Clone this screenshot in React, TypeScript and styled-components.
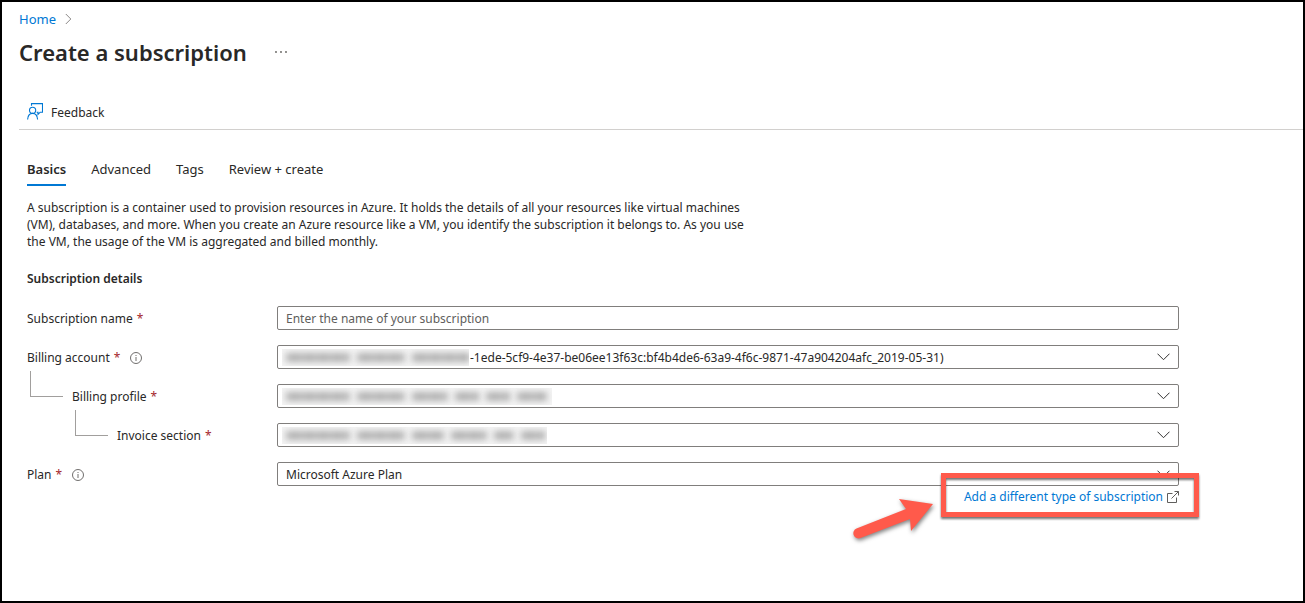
import React from 'react';
import styled, { createGlobalStyle } from 'styled-components';

const GlobalStyle = createGlobalStyle`
  *, *::before, *::after { box-sizing: border-box; }
  body {
    margin: 0;
    background: #fff;
    color: #292827;
    font: 400 12px/20px 'Noto Sans', 'Open Sans', sans-serif;
  }
  button, input, select { font: inherit; color: inherit; }
`;

const Page = styled.div`
  min-height: 100vh;
  padding: 7px 0 24px 17px;
  border: 2px solid #000;
`;

const Breadcrumb = styled.nav`
  display: flex;
  align-items: center;
  gap: 9px;
  font-size: 13px;
`;

const Link = styled.a`
  color: #0078d4;
  text-decoration: none;
`;

const TitleBar = styled.header`
  display: flex;
  align-items: center;
  gap: 26px;
  margin-top: 8px;
`;

const Title = styled.h1`
  margin: 0;
  font-size: 22px;
  font-weight: 600;
  line-height: 30px;
`;

const PlainButton = styled.button`
  display: flex;
  align-items: center;
  gap: 8px;
  padding: 0;
  border: 0;
  background: none;
  cursor: pointer;
`;

const Toolbar = styled.div`
  display: flex;
  height: 35px;
  margin-top: 28px;
  padding: 2px 0 0 8px;
  border-bottom: 1px solid #d2d0ce;
`;

const Content = styled.main`
  padding: 0 124px 0 8px;
`;

const Tabs = styled.div`
  display: flex;
  gap: 25px;
  margin-top: 29px;
`;

const Tab = styled.button<{ $active?: boolean }>`
  padding: 0 0 5px;
  border: 0;
  border-bottom: 2px solid ${(p) => (p.$active ? '#0078d4' : 'transparent')};
  background: none;
  font-size: 13px;
  font-weight: ${(p) => (p.$active ? 600 : 400)};
  cursor: pointer;
`;

const Intro = styled.p`
  max-width: 736px;
  margin: 13px 0 0;
  line-height: 17px;
`;

const SectionTitle = styled.h2`
  margin: 19px 0 0;
  font-size: 12px;
  font-weight: 600;
`;

const Form = styled.form`
  display: flex;
  flex-direction: column;
  gap: 15px;
  margin-top: 17px;
`;

const Row = styled.div`
  display: grid;
  grid-template-columns: 250px 1fr;
`;

const LabelCell = styled.div<{ $level?: number }>`
  display: flex;
  align-items: flex-start;
  height: 24px;
  padding-left: ${(p) => (p.$level ? p.$level * 45 - 42 : 0)}px;
  line-height: 26px;
`;

const Elbow = styled.span`
  width: 33px;
  height: 26px;
  margin: -13px 9px 0 0;
  border: solid #a19f9d;
  border-width: 0 0 1px 1px;
`;

const Required = styled.span`
  margin-left: 4px;
  color: #a4262c;
`;

const InfoButton = styled(PlainButton)`
  height: 26px;
  margin-left: 10px;
`;

const Control = styled.div`
  position: relative;
  display: flex;
`;

const TextBox = styled.input`
  width: 100%;
  height: 24px;
  padding: 0 8px;
  border: 1px solid #807e7c;
  border-radius: 2px;
  background: #fff;
  &::placeholder { color: #605e5c; opacity: 1; }
`;

const Dropdown = styled.select<{ $indent?: number }>`
  width: 100%;
  height: 24px;
  padding: 2px 28px 0 ${(p) => p.$indent ?? 8}px;
  border: 1px solid #807e7c;
  border-radius: 2px;
  background: #fff;
  appearance: none;
`;

const Chevron = styled.svg`
  position: absolute;
  top: 8px;
  right: 9px;
  pointer-events: none;
`;

const Redaction = styled.span<{ $width: number }>`
  position: absolute;
  top: 4px;
  left: 5px;
  width: ${(p) => p.$width}px;
  height: 17px;
  padding: 4px;
  display: flex;
  gap: 7px;
  overflow: hidden;
  background: #f4f4f4;
  pointer-events: none;
`;

const Smudge = styled.span<{ $width: number }>`
  flex: none;
  width: ${(p) => p.$width}px;
  background: repeating-linear-gradient(90deg, #b2b2b2 0 4px, #bebebe 4px 7px, #aaa 7px 12px, #c4c4c4 12px 14px);
  filter: blur(3px);
`;

const LinkLine = styled.div`
  position: relative;
  display: flex;
  align-items: center;
  justify-content: flex-end;
  gap: 4px;
  margin-top: 1px;
`;

const Callout = styled.div`
  position: absolute;
  top: -14px;
  right: -20px;
  width: 258px;
  height: 44px;
  border: 5px solid #ff5a4b;
  filter: drop-shadow(0 2px 1px rgba(0, 0, 0, 0.55));
  pointer-events: none;
`;

const Arrow = styled.svg`
  position: absolute;
  top: 6px;
  right: 240px;
  filter: drop-shadow(1px 2px 2px rgba(0, 0, 0, 0.5));
  pointer-events: none;
`;

const InfoIcon = () => (
  <svg width="12" height="12" viewBox="0 0 12 12" fill="none" stroke="#605e5c" aria-hidden="true">
    <circle cx="6" cy="6" r="5.5" strokeWidth=".9" />
    <path d="M6 5v4M6 3v1" strokeWidth=".9" />
  </svg>
);

interface SelectFieldProps {
  id: string;
  label: string;
  level?: number;
  info?: boolean;
  value?: string;
  indent?: number;
  redactedWidth?: number;
  smudges?: number[];
}

const SelectField = ({ id, label, level, info, value = '', indent, redactedWidth, smudges }: SelectFieldProps) => (
  <Row>
    <LabelCell $level={level}>
      {level && <Elbow />}
      <label htmlFor={id}>
        {label}
        <Required>*</Required>
      </label>
      {info && (
        <InfoButton type="button" aria-label={`About ${label.toLowerCase()}`}>
          <InfoIcon />
        </InfoButton>
      )}
    </LabelCell>
    <Control>
      <Dropdown id={id} $indent={indent}>
        <option>{value}</option>
      </Dropdown>
      {smudges && redactedWidth && (
        <Redaction $width={redactedWidth} aria-hidden="true">
          {smudges.map((width, i) => (
            <Smudge key={i} $width={width} />
          ))}
        </Redaction>
      )}
      <Chevron width="13" height="8" viewBox="0 0 13 8" fill="none" stroke="#323130" aria-hidden="true">
        <path d="M.5.7l6 6 6-6" />
      </Chevron>
    </Control>
  </Row>
);

const tabs = ['Basics', 'Advanced', 'Tags', 'Review + create'];

export default function App() {
  return (
    <>
      <GlobalStyle />
      <Page>
        <Breadcrumb aria-label="Breadcrumb">
          <Link href="#home">Home</Link>
          <svg width="7" height="12" viewBox="0 0 7 12" fill="none" stroke="#8a8886" aria-hidden="true">
            <path d="M.8 1l5 5-5 5" />
          </svg>
        </Breadcrumb>
        <TitleBar>
          <Title>Create a subscription</Title>
          <PlainButton type="button" aria-label="More options">
            <svg width="16" height="4" viewBox="0 0 16 4" fill="#605e5c" aria-hidden="true">
              <circle cx="3" cy="2" r=".9" />
              <circle cx="8" cy="2" r=".9" />
              <circle cx="13" cy="2" r=".9" />
            </svg>
          </PlainButton>
        </TitleBar>
        <Toolbar>
          <PlainButton type="button">
            <svg width="16" height="20" viewBox="0 0 16 20" fill="none" stroke="#0078d4" strokeWidth="1.1" aria-hidden="true">
              <path d="M4.500 2.800V.600h11v8.600h-2.300L11 11.400V9.200H9.600" />
              <circle cx="5.600" cy="7.300" r="3.100" />
              <path d="M.600 16.500c.200-3.700 2.200-6.100 5-6.100s4.800 2.400 5 6.100" />
            </svg>
            Feedback
          </PlainButton>
        </Toolbar>
        <Content>
          <Tabs role="tablist">
            {tabs.map((name, i) => (
              <Tab key={name} type="button" role="tab" aria-selected={i === 0} $active={i === 0}>
                {name}
              </Tab>
            ))}
          </Tabs>
          <Intro>
            A subscription is a container used to provision resources in Azure. It holds the details of all your
            resources like virtual machines (VM), databases, and more. When you create an Azure resource like a VM, you
            identify the subscription it belongs to. As you use the VM, the usage of the VM is aggregated and billed
            monthly.
          </Intro>
          <SectionTitle>Subscription details</SectionTitle>
          <Form>
            <Row>
              <LabelCell>
                <label htmlFor="name">
                  Subscription name
                  <Required>*</Required>
                </label>
              </LabelCell>
              <Control>
                <TextBox id="name" type="text" placeholder="Enter the name of your subscription" />
              </Control>
            </Row>
            <SelectField
              id="account"
              label="Billing account"
              info
              indent={192}
              value="-1ede-5cf9-4e37-be06ee13f63c:bf4b4de6-63a9-4f6c-9871-47a904204afc_2019-05-31)"
              redactedWidth={187}
              smudges={[64, 48, 58]}
            />
            <SelectField
              id="profile"
              label="Billing profile"
              level={1}
              redactedWidth={270}
              smudges={[64, 48, 36, 24, 24, 30]}
            />
            <SelectField
              id="invoice"
              label="Invoice section"
              level={2}
              redactedWidth={265}
              smudges={[64, 48, 32, 36, 20, 24]}
            />
            <SelectField id="plan" label="Plan" info value="Microsoft Azure Plan" />
          </Form>
          <LinkLine>
            <Link href="#other-subscription">Add a different type of subscription</Link>
            <svg width="12" height="12" viewBox="0 0 12 12" fill="none" stroke="#605e5c" aria-hidden="true">
              <path d="M5.500 2.500h-5v9h9v-5M7.500.500h4v4M11.500.500l-7 7" />
            </svg>
            <Callout />
            <Arrow width="88" height="48" viewBox="0 0 88 48" fill="#ff5a4b" aria-hidden="true">
              <path d="M82 11L48 6l7 10L5.500 35.500a5 5 0 0 0 4 9.500L59 26l1 12z" />
            </Arrow>
          </LinkLine>
        </Content>
      </Page>
    </>
  );
}
